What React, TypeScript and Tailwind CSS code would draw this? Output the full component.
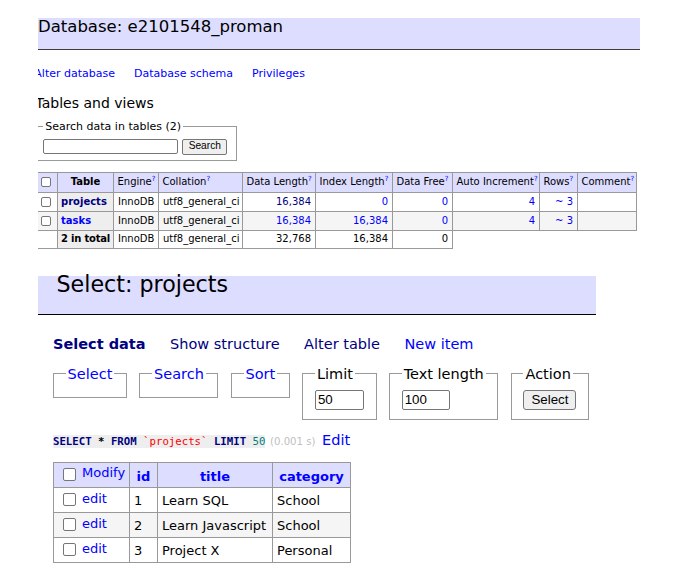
import React from "react";

const SANS = "font-['DejaVu_Sans',sans-serif]";
const ARIAL = "font-['Liberation_Sans',Arial,sans-serif]";
const MONO = "font-['DejaVu_Sans_Mono',monospace]";

function SmallBox() {
  return <span className="inline-block h-[10px] w-[10px] rounded-[2px] border border-[#767676] bg-white align-middle" />;
}

function Box() {
  return <span className="inline-block h-[13px] w-[13px] shrink-0 rounded-[2px] border border-[#767676] bg-white" />;
}

function Help() {
  return <sup className="-top-[4px] text-[7px] text-[#00f]">?</sup>;
}

const topCols = [20, 56, 45, 84, 73, 77, 60, 87, 38, 59];

function DatabasePart() {
  return (
    <section className="ml-[38px] w-[602px] overflow-hidden pt-[18px]">
      <h2 className="h-[32px] border-b border-[#3c3c3c] bg-[#ddf] text-[16.5px] font-normal leading-[17px]">
        Database: e2101548_proman
      </h2>
      <div className="-ml-[3.7px] mt-[18px] flex gap-[19px] text-[11px] leading-[12px] text-[#00f]">
        <a>Alter database</a>
        <a>Database schema</a>
        <a>Privileges</a>
      </div>
      <h3 className="-ml-[2.5px] mt-[14.5px] text-[14px] font-normal leading-[17px]">Tables and views</h3>
      <fieldset className="-ml-[4.5px] mt-[8.5px] w-fit border border-[#999] px-[8.8px] pb-[5.5px] pt-[5.5px]">
        <legend className="px-[2px] text-[11px] leading-[13px]">Search data in tables (2)</legend>
        <div className="flex items-center gap-[4px]">
          <input className="h-[15px] w-[135px] rounded-[2px] border border-[#767676] bg-white" />
          <button className={`h-[16px] w-[45px] rounded-[2px] border border-[#767676] bg-[#efefef] text-[10.2px] leading-none ${ARIAL}`}>
            Search
          </button>
        </div>
      </fieldset>
      <table className="-ml-[1px] mt-[10.5px] w-[600px] table-fixed border-collapse text-[10px] leading-[12px]">
        <colgroup>
          {topCols.map((w, i) => (
            <col key={i} style={{ width: w }} />
          ))}
        </colgroup>
        <thead>
          <tr className="h-[20px] bg-[#ddf] [&>*]:whitespace-nowrap [&>*]:border [&>*]:border-[#999] [&>td]:px-[3.5px] [&>td]:text-left">
            <td className="!pl-[3px]">
              <SmallBox />
            </td>
            <th className="px-[3px] text-center font-bold">Table</th>
            <td>Engine<Help /></td>
            <td>Collation<Help /></td>
            <td>Data Length<Help /></td>
            <td>Index Length<Help /></td>
            <td>Data Free<Help /></td>
            <td>Auto Increment<Help /></td>
            <td>Rows<Help /></td>
            <td>Comment<Help /></td>
          </tr>
        </thead>
        <tbody className="[&_td]:whitespace-nowrap [&_td]:border [&_td]:border-[#999] [&_td]:px-[4px] [&_th]:whitespace-nowrap [&_th]:border [&_th]:border-[#999] [&_th]:bg-[#eee] [&_th]:px-[3px] [&_th]:text-left">
          <tr className="h-[19px]">
            <td className="!pl-[3px]">
              <SmallBox />
            </td>
            <th className="font-bold text-[#000080]">projects</th>
            <td>InnoDB</td>
            <td>utf8_general_ci</td>
            <td className="text-right text-[#000080]">16,384</td>
            <td className="text-right text-[#00f]">0</td>
            <td className="text-right text-[#00f]">0</td>
            <td className="text-right text-[#00f]">4</td>
            <td className="text-right text-[#00f]">~ 3</td>
            <td></td>
          </tr>
          <tr className="h-[19px] bg-[#f5f5f5]">
            <td className="!pl-[3px]">
              <SmallBox />
            </td>
            <th className="font-bold text-[#00f]">tasks</th>
            <td>InnoDB</td>
            <td>utf8_general_ci</td>
            <td className="text-right text-[#00f]">16,384</td>
            <td className="text-right text-[#00f]">16,384</td>
            <td className="text-right text-[#00f]">0</td>
            <td className="text-right text-[#00f]">4</td>
            <td className="text-right text-[#00f]">~ 3</td>
            <td></td>
          </tr>
          <tr className="h-[18px]">
            <td></td>
            <th className="font-bold tracking-[-0.2px]">2 in total</th>
            <td>InnoDB</td>
            <td>utf8_general_ci</td>
            <td className="text-right">32,768</td>
            <td className="text-right">16,384</td>
            <td className="text-right">0</td>
          </tr>
        </tbody>
      </table>
    </section>
  );
}

const rows = [
  { id: 1, title: "Learn SQL", category: "School" },
  { id: 2, title: "Learn Javascript", category: "School" },
  { id: 3, title: "Project X", category: "Personal" },
];

function SelectPart() {
  return (
    <section className="ml-[38px] mt-[27px] w-[558px]">
      <h2 className="h-[39px] border-b border-black bg-[#ddf] pl-[18.5px] text-[22.2px] font-normal leading-[17px]">
        Select: projects
      </h2>
      <nav className="ml-[15px] mt-[20.5px] flex gap-[24.5px] text-[14.5px] leading-[18px] text-[#000080]">
        <a className="font-bold">Select data</a>
        <a>Show structure</a>
        <a>Alter table</a>
        <a className="text-[#00f]">New item</a>
      </nav>
      <div className="ml-[15px] mt-[11.5px] flex items-start gap-[12.5px] text-[14.5px] leading-[18px]">
        {["Select", "Search", "Sort"].map((t) => (
          <fieldset key={t} className="border border-[#999] px-[11.6px] pb-[7.25px] pt-[7.25px]">
            <legend className="px-[2px] text-[#00f]">{t}</legend>
          </fieldset>
        ))}
        <fieldset className="border border-[#999] px-[11.6px] pb-[7.25px] pt-[7.25px]">
          <legend className="px-[2px]">Limit</legend>
          <div className="h-[21.5px]">
            <input
              defaultValue="50"
              className={`h-[20px] w-[49px] rounded-[2px] border border-[#767676] px-[2px] text-[13.3px] ${ARIAL}`}
            />
          </div>
        </fieldset>
        <fieldset className="border border-[#999] px-[11.6px] pb-[7.25px] pt-[7.25px]">
          <legend className="px-[2px]">Text length</legend>
          <div className="h-[21.5px]">
            <input
              defaultValue="100"
              className={`h-[20px] w-[48px] rounded-[2px] border border-[#767676] px-[2px] text-[13.3px] ${ARIAL}`}
            />
          </div>
        </fieldset>
        <fieldset className="border border-[#999] px-[11.6px] pb-[7.25px] pt-[7.25px]">
          <legend className="px-[2px]">Action</legend>
          <div className="h-[21.5px]">
            <button
              className={`h-[20px] w-[53px] rounded-[3px] border border-[#767676] bg-[#efefef] text-[13.3px] leading-none ${ARIAL}`}
            >
              Select
            </button>
          </div>
        </fieldset>
      </div>
      <p className="ml-[15px] mt-[11.5px] text-[14.5px] leading-[18px]">
        <code className={`bg-[#eee] text-[10.7px] font-bold ${MONO}`}>
          <span className="text-[#000080]">SELECT</span> * <span className="text-[#000080]">FROM</span>{" "}
          <span className="font-normal text-[#f00]">`projects`</span> <span className="text-[#000080]">LIMIT</span>{" "}
          <span className="font-normal text-[#007f7f]">50</span>
        </code>{" "}
        <span className="text-[10.15px] text-[#c0c0c0]">(0.001 s)</span> <a className="ml-[2px] text-[#00f]">Edit</a>
      </p>
      <table className="ml-[15px] mt-[10.5px] w-[297px] table-fixed border-collapse text-[13px] leading-[16px]">
        <colgroup>
          <col className="w-[76px]" />
          <col className="w-[28px]" />
          <col className="w-[115px]" />
          <col className="w-[78px]" />
        </colgroup>
        <thead>
          <tr className="h-[25px] bg-[#ddf]">
            <td className="border border-[#999] pl-[9px]">
              <div className="flex items-center gap-[6px]">
                <Box />
                <span className="pb-[3px] text-[#00f]">Modify</span>
              </div>
            </td>
            <th className="border border-[#999] pt-[4px] text-center font-bold text-[#00f]">id</th>
            <th className="border border-[#999] pt-[4px] text-center font-bold text-[#00f]">title</th>
            <th className="border border-[#999] pt-[4px] text-center font-bold text-[#00f]">category</th>
          </tr>
        </thead>
        <tbody>
          {rows.map((r, i) => (
            <tr key={r.id} className={i === 1 ? "h-[25px] bg-[#f5f5f5]" : "h-[25px]"}>
              <td className="border border-[#999] pl-[9px]">
                <div className="flex items-center gap-[6px]">
                  <Box />
                  <span className="pb-[1px] text-[#00f]">edit</span>
                </div>
              </td>
              <td className="border border-[#999] px-[4px] pt-[2px]">{r.id}</td>
              <td className="whitespace-nowrap border border-[#999] px-[4px] pt-[2px]">{r.title}</td>
              <td className="border border-[#999] px-[4px] pt-[2px]">{r.category}</td>
            </tr>
          ))}
        </tbody>
      </table>
    </section>
  );
}

export default function App() {
  return (
    <div className={`h-[577px] w-[685px] overflow-hidden bg-white text-black ${SANS}`}>
      <DatabasePart />
      <SelectPart />
    </div>
  );
}
